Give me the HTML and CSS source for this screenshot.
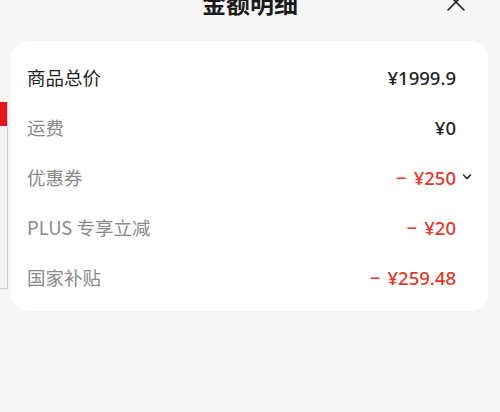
FILE: index.html
```html
<!DOCTYPE html>
<html lang="zh">
<head>
<meta charset="utf-8">
<link rel="stylesheet" href="styles.css">
</head>
<body>
<div class="under">
  <div class="under-red"></div>
</div>
<div class="sheet">
  <div class="header">
    <div class="title">金额明细</div>
    <svg class="close" width="20" height="20" viewBox="0 0 20 20"><path d="M2 2 L18 18 M18 2 L2 18" stroke="#1a1a1a" stroke-width="1.6" fill="none" stroke-linecap="round"/></svg>
  </div>
  <div class="card">
    <div class="row">
      <span class="label label-dark">商品总价</span>
      <span class="value">¥1999.9</span>
      <span class="slot"></span>
    </div>
    <div class="row">
      <span class="label">运费</span>
      <span class="value">¥0</span>
      <span class="slot"></span>
    </div>
    <div class="row">
      <span class="label">优惠券</span>
      <span class="value value-red"><span class="minus">−</span>¥250</span>
      <span class="slot"><svg width="10" height="8" viewBox="0 0 10 8"><path d="M1.5 2 L5 5.5 L8.5 2" stroke="#222" stroke-width="1.6" fill="none" stroke-linecap="round" stroke-linejoin="round"/></svg></span>
    </div>
    <div class="row">
      <span class="label">PLUS 专享立减</span>
      <span class="value value-red"><span class="minus">−</span>¥20</span>
      <span class="slot"></span>
    </div>
    <div class="row">
      <span class="label">国家补贴</span>
      <span class="value value-red"><span class="minus">−</span>¥259.48</span>
      <span class="slot"></span>
    </div>
  </div>
</div>
</body>
</html>
```

FILE: styles.css
```css
html, body {
  margin: 0;
  padding: 0;
}
body {
  width: 500px;
  height: 412px;
  background: #f6f6f6;
  font-family: "Noto Sans CJK SC", "Noto Sans", sans-serif;
  position: relative;
  overflow: hidden;
}
.under {
  position: absolute;
  left: 0;
  top: 102px;
  width: 7px;
  height: 186px;
  background: #f3f3f3;
  border-right: 1px solid #cfcfcf;
  border-bottom: 1px solid #cfcfcf;
}
.under-red {
  height: 24px;
  background: #e8141c;
}
.sheet {
  position: relative;
}
.header {
  height: 41px;
  position: relative;
  display: flex;
  justify-content: center;
}
.title {
  margin-top: -9px;
  font-size: 24px;
  line-height: 24px;
  font-weight: 700;
  color: #1a1a1a;
}
.close {
  position: absolute;
  left: 446px;
  top: -8px;
}
.card {
  margin: 0 12px 0 11px;
  background: #ffffff;
  border-radius: 18px;
  padding: 11px 16px 9px 16px;
  display: flex;
  flex-direction: column;
}
.row {
  height: 50px;
  display: flex;
  align-items: center;
}
.label {
  flex: 1;
  font-size: 18.5px;
  color: #8a8a8a;
}
.label-dark {
  color: #1f1f1f;
}
.value {
  font-family: "Noto Sans", "Noto Sans CJK SC", sans-serif;
  font-size: 18.5px;
  font-weight: 500;
  color: #1f1f1f;
}
.value-red {
  color: #e2372a;
}
.minus {
  margin-right: 7px;
}
.slot {
  width: 16px;
  display: flex;
  justify-content: flex-end;
  align-items: center;
}
```
